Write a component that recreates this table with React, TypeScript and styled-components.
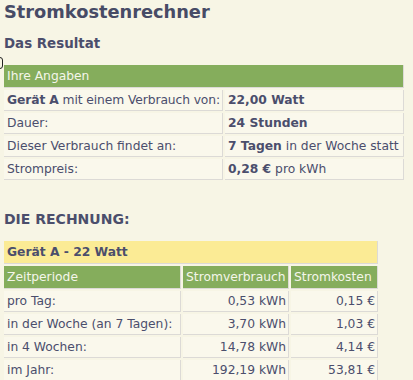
import React from "react";
import styled, { createGlobalStyle } from "styled-components";

const Global = createGlobalStyle`
  html, body { margin: 0; padding: 0; background: #f7f5e5; }
  body { font-family: "DejaVu Sans", Verdana, sans-serif; color: #4b4e6c; }
`;

const Page = styled.div`
  position: relative;
  padding: 0 2px;
  width: 409px;
`;

const Title = styled.h1`
  margin: 0;
  padding: 1px 2px 0;
  font-size: 17.8px;
  line-height: 22px;
  font-weight: bold;
  color: #474b66;
`;

const SubTitle = styled.h2<{ $top: number; $size: number }>`
  margin: ${(p) => p.$top}px 0 0;
  padding: 0 2px;
  font-size: ${(p) => p.$size}px;
  line-height: 18px;
  font-weight: bold;
  color: #4b4e6c;
`;

const Stray = styled.span`
  position: absolute;
  left: -3px;
  top: 57px;
  width: 4px;
  height: 10px;
  border: 1px solid #222;
  border-radius: 3px;
`;

const Table = styled.table<{ $top: number; $width: number }>`
  margin-top: ${(p) => p.$top}px;
  width: ${(p) => p.$width}px;
  border-collapse: separate;
  border-spacing: 2px;
  table-layout: fixed;
  font-size: 12.3px;
`;

const Cell = styled.td<{ $right?: boolean }>`
  background: #faf8ec;
  border-right: 1px solid #dcdad6;
  border-bottom: 1px solid #dcdad6;
  padding: 2px ${(p) => (p.$right ? 2 : 3)}px 2px 3px;
  line-height: 16px;
  height: 16px;
  white-space: nowrap;
  text-align: ${(p) => (p.$right ? "right" : "left")};
  color: #4b4e6c;
`;

const HeadCell = styled.th<{ $yellow?: boolean }>`
  background: ${(p) => (p.$yellow ? "#fbeb95" : "#85ad5c")};
  color: ${(p) => (p.$yellow ? "#4b4e6c" : "#f4f6ea")};
  font-weight: ${(p) => (p.$yellow ? "bold" : "normal")};
  border-right: 1px solid #dcdad6;
  border-bottom: 1px solid #dcdad6;
  padding: 3px 2px 3px 3px;
  line-height: 16px;
  text-align: left;
  white-space: nowrap;
`;

const Col = styled.col<{ $w: number }>`
  width: ${(p) => p.$w}px;
`;

const Tight = styled.span`
  letter-spacing: -0.1px;
`;

const inputs: [React.ReactNode, React.ReactNode][] = [
  [<Tight><b>Gerät A</b> mit einem Verbrauch von:</Tight>, <b>22,00 Watt</b>],
  ["Dauer:", <b>24 Stunden</b>],
  ["Dieser Verbrauch findet an:", <><b>7 Tagen</b> in der Woche statt</>],
  ["Strompreis:", <><b>0,28 €</b> pro kWh</>],
];

const calc: [string, string, string][] = [
  ["pro Tag:", "0,53 kWh", "0,15 €"],
  ["in der Woche (an 7 Tagen):", "3,70 kWh", "1,03 €"],
  ["in 4 Wochen:", "14,78 kWh", "4,14 €"],
  ["im Jahr:", "192,19 kWh", "53,81 €"],
];

export default function App() {
  return (
    <Page>
      <Global />
      <Stray />
      <Title>Stromkostenrechner</Title>
      <SubTitle $top={12} $size={13.4}>Das Resultat</SubTitle>
      <Table $top={10} $width={404}>
        <colgroup>
          <Col $w={219} />
          <Col $w={179} />
        </colgroup>
        <thead>
          <tr>
            <HeadCell colSpan={2}>Ihre Angaben</HeadCell>
          </tr>
        </thead>
        <tbody>
          {inputs.map(([a, b], i) => (
            <tr key={i}>
              <Cell>{a}</Cell>
              <Cell>{b}</Cell>
            </tr>
          ))}
        </tbody>
      </Table>
      <SubTitle $top={28} $size={14}>DIE RECHNUNG:</SubTitle>
      <Table $top={11} $width={378}>
        <colgroup>
          <Col $w={177} />
          <Col $w={106} />
          <Col $w={87} />
        </colgroup>
        <thead>
          <tr>
            <HeadCell $yellow colSpan={3}>Gerät A - 22 Watt</HeadCell>
          </tr>
          <tr>
            <HeadCell>Zeitperiode</HeadCell>
            <HeadCell>Stromverbrauch</HeadCell>
            <HeadCell>Stromkosten</HeadCell>
          </tr>
        </thead>
        <tbody>
          {calc.map(([a, b, c]) => (
            <tr key={a}>
              <Cell>{a}</Cell>
              <Cell $right>{b}</Cell>
              <Cell $right>{c}</Cell>
            </tr>
          ))}
        </tbody>
      </Table>
    </Page>
  );
}
